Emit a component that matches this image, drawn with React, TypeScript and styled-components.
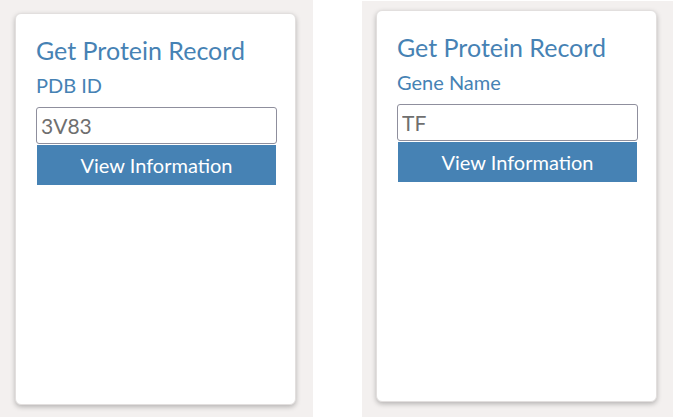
import styled, { createGlobalStyle } from 'styled-components'

const GlobalStyle = createGlobalStyle`
    html, body {
        margin: 0;
        padding: 0;
        background: #ffffff;
    }
    body {
        font-family: Lato, "Open Sans", sans-serif;
    }
`

const Page = styled.div`
    display: flex;
    flex-direction: row;
    justify-content: space-between;
    width: 673px;
    height: 417px;
    overflow: hidden;
`

interface PaneProps {
    right?: boolean,
}
const Pane = styled.div<PaneProps>`
    box-sizing: border-box;
    width: ${props => props.right ? '311' : '313'}px;
    height: ${props => props.right ? '416' : '417'}px;
    margin-top: ${props => props.right ? '1' : '0'}px;
    padding: ${props => props.right ? '9px 0 0 14px' : '13px 0 0 15px'};
    background-color: #f3f0ef;
`

const Card = styled.div`
    box-sizing: border-box;
    display: flex;
    flex-direction: column;
    width: 281px;
    height: 392px;
    padding: 21px 20px 0 20px;
    background-color: #ffffff;
    border: solid 1px #e2dfde;
    border-radius: 6px;
    box-shadow: 0 2px 5px rgba(0, 0, 0, 0.25);
`

const Title = styled.div`
    margin: 0;
    font-size: 25px;
    line-height: 30px;
    color: #4682b4;
`

const Label = styled.div`
    margin: 8px 0 0 0;
    font-size: 20px;
    line-height: 25px;
    color: #4682b4;
`

const Input = styled.input`
    box-sizing: border-box;
    width: 241px;
    height: 37px;
    margin: 9px 0 0 0;
    padding: 0 4px;
    font-family: Lato, "Open Sans", sans-serif;
    font-size: 21px;
    color: #6f6f6f;
    border: solid 1px #8f8f9d;
    border-radius: 3px;
    outline: none;
`

const Button = styled.button`
    box-sizing: border-box;
    width: 239px;
    height: 40px;
    margin: 1px 0 0 1px;
    padding: 0;
    font-family: Lato, "Open Sans", sans-serif;
    font-size: 20px;
    color: #ffffff;
    background-color: #4682b4;
    border: none;
    cursor: pointer;

    &:hover {
        background-color: #3b72a0;
    }
`

interface RecordProps {
    label: string,
    value: string,
}
function RecordCard(props: RecordProps) {
    return (
        <Card>
            <Title>Get Protein Record</Title>
            <Label>{props.label}</Label>
            <Input defaultValue={props.value} />
            <Button>View Information</Button>
        </Card>
    )
}

export default function App() {
    return (
        <>
            <GlobalStyle />
            <Page>
                <Pane>
                    <RecordCard label="PDB ID" value="3V83" />
                </Pane>
                <Pane right>
                    <RecordCard label="Gene Name" value="TF" />
                </Pane>
            </Page>
        </>
    )
}
